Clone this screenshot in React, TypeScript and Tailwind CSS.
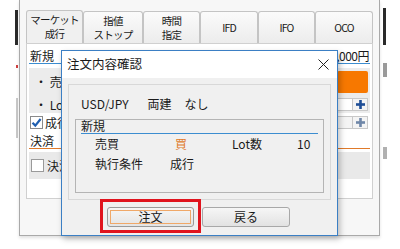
import React from 'react';

// Tab labels of the order window behind the dialog
const tabs: { label: string[]; w: string; active?: boolean }[] = [
  { label: ['マーケット', '成行'], w: 'w-[57px]', active: true },
  { label: ['指値', 'ストップ'], w: 'w-[60px]' },
  { label: ['時間', '指定'], w: 'w-[57px]' },
  { label: ['IFD'], w: 'w-[58px]' },
  { label: ['IFO'], w: 'w-[57px]' },
  { label: ['OCO'], w: 'w-[58px]' },
];

const PlusBox = ({ dim }: { dim?: boolean }) => (
  <div className="flex h-[13px] w-[16px] items-center justify-center border border-[#c8c8c8] bg-[#f4f4f4]">
    <svg width="9" height="9" viewBox="0 0 9 9">
      <rect x="3.2" y="0" width="2.6" height="9" fill={dim ? '#6f87a8' : '#1f4e96'} />
      <rect x="0" y="3.2" width="9" height="2.6" fill={dim ? '#6f87a8' : '#1f4e96'} />
    </svg>
  </div>
);

export default function App() {
  return (
    <div
      className="relative flex h-[249px] w-[400px] overflow-hidden bg-white text-[12px] text-[#1a1a1a]"
      style={{ fontFamily: '"Noto Sans CJK JP", "Noto Sans", sans-serif' }}
    >
      {/* left strip: edge of another window */}
      <div className="flex w-[19px] flex-col items-end pt-[10px] pr-[1px]">
        <div className="h-[35px] w-[3px] bg-[#2a2a2a]" />
        <div className="mt-[20px] h-[3px] w-[2px] bg-[#d04040]" />
        <div className="mt-[30px] h-[40px] w-[2px] bg-[#c8c8c8]" />
      </div>

      {/* main order window */}
      <div className="flex h-[236px] w-[361px] flex-col border-x border-b border-[#a9a9a9] bg-[#f7f7f7] pl-[6px] pt-[10px] shadow-[0_2px_3px_rgba(0,0,0,0.12)]">
        <div className="flex items-end">
          {tabs.map((t, i) => (
            <div
              key={i}
              className={`flex ${t.w} flex-col items-center justify-center whitespace-nowrap rounded-t-[3px] border border-b-0 border-[#c4c4c4] text-[10.5px] leading-[16px] tracking-[-0.8px] ${
                t.active ? 'h-[33px] bg-[#f0f0f0]' : 'h-[32px] bg-gradient-to-b from-[#fbfbfb] to-[#ececec]'
              }`}
            >
              {t.label.map((l) => (
                <span key={l} className="-my-[1px]">
                  {l}
                </span>
              ))}
            </div>
          ))}
        </div>
        <div className="flex h-[156px] w-[347px] flex-col border border-[#d0d0d0] bg-white px-[2px] pt-[3px]">
          <div className="flex h-[17px] items-end justify-between border-b border-[#3c8dd0] px-[1px] text-[12px]">
            <span className="leading-[15px]">新規</span>
            <span className="leading-[15px] tracking-[-0.5px]">1,000円</span>
          </div>
          <div className="mt-[4px] flex h-[28px] items-center justify-between bg-[#ececec]">
            <span className="pl-[6px]">・ 売買</span>
            <div className="mr-[2px] h-[22px] w-[31px] rounded-[2px] bg-[#f77800]" />
          </div>
          <div className="flex h-[17px] items-center justify-between bg-[#ececec]">
            <span className="pl-[6px]">・ Lot数</span>
            <div className="mr-[2px] flex items-center">
              <div className="h-[13px] w-[16px] border border-r-0 border-[#c8c8c8] bg-white" />
              <PlusBox />
            </div>
          </div>
          <div className="mt-[1px] flex h-[17px] items-center justify-between">
            <span className="flex items-center gap-[2px] pl-[1px]">
              <span className="flex h-[13px] w-[13px] items-center justify-center border border-[#8a8a8a] bg-white">
                <svg width="11" height="11" viewBox="0 0 11 11">
                  <path d="M1.5 5.8 L4.3 8.6 L9.6 2" fill="none" stroke="#1f5fb0" strokeWidth="2.2" />
                </svg>
              </span>
              成行
            </span>
            <div className="mr-[2px] flex items-center">
              <div className="h-[13px] w-[16px] border border-r-0 border-[#c8c8c8] bg-[#f4f4f4]" />
              <PlusBox dim />
            </div>
          </div>
          <div className="mt-[1px] flex h-[17px] items-end border-b border-[#e07a2a] px-[1px]">
            <span className="leading-[15px]">決済</span>
          </div>
          <div className="mt-[3px] flex h-[27px] items-center bg-[#e9e9e9] pl-[2px]">
            <span className="flex items-center gap-[3px]">
              <span className="h-[13px] w-[13px] border border-[#9a9a9a] bg-white" />
              決済
            </span>
          </div>
        </div>
      </div>

      {/* right strip: edge of another window */}
      <div className="flex w-[20px] flex-col pl-[3px] pt-[8px]">
        <div className="h-[37px] w-[3px] bg-[#2a2a2a]" />
        <div className="mt-[18px] h-[14px] w-[4px] bg-[#9a9a9a]" />
        <div className="mt-[70px] h-[12px] w-[4px] bg-[#b0b0b0]" />
      </div>

      {/* confirmation dialog */}
      <div className="absolute left-[61px] top-[50px] flex h-[186px] w-[277px] flex-col border border-[#3b7fc4] bg-[#f0f0f0] shadow-[2px_3px_6px_rgba(0,0,0,0.25)]">
        <div className="flex h-[27px] items-center justify-between bg-white pl-[5px] pr-[8px]">
          <span className="text-[12.5px]">注文内容確認</span>
          <svg width="11" height="11" viewBox="0 0 11 11">
            <path d="M0.5 0.5 L10.5 10.5 M10.5 0.5 L0.5 10.5" stroke="#222" strokeWidth="1" />
          </svg>
        </div>
        <div className="mx-[6px] mt-[6px] flex h-[116px] flex-col border border-[#d8d8d8] px-[6px]">
          <div className="flex h-[34px] items-center gap-[19px] pl-[6px] pt-[3px]">
            <span>USD/JPY</span>
            <span className="flex gap-[13px]">
              <span>両建</span>
              <span>なし</span>
            </span>
          </div>
          <div className="h-[74px] border border-[#b4b4b4] px-[5px]">
            <div className="flex h-[14px] items-end border-b border-[#3c8dd0] leading-[14px]">新規</div>
            <div className="relative h-[20px] leading-[20px]">
              <span className="absolute left-[14px] top-[0px]">売買</span>
              <span className="absolute left-[94px] top-[0px] text-[#e07a2a]">買</span>
              <span className="absolute left-[151px] top-[0px]">Lot数</span>
              <span className="absolute left-[216px] top-[0px]">10</span>
            </div>
            <div className="relative h-[20px] leading-[20px]">
              <span className="absolute left-[14px]">執行条件</span>
              <span className="absolute left-[89px]">成行</span>
            </div>
          </div>
        </div>
        <div className="mt-[7px] flex gap-[8px] pl-[45px]">
          <button className="flex h-[20px] w-[87px] items-center justify-center rounded-[3px] border border-[#9a9a9a] bg-gradient-to-b from-[#f6f6f6] to-[#e4e4e4] p-[2px]">
            <span className="flex h-full w-full items-center justify-center border border-[#f0a868] text-[12px] leading-none">
              注文
            </span>
          </button>
          <button className="flex h-[20px] w-[88px] items-center justify-center rounded-[3px] border border-[#a8a8a8] bg-gradient-to-b from-[#f6f6f6] to-[#e2e2e2] text-[12px] leading-none">
            戻る
          </button>
        </div>
      </div>

      {/* red highlight around the order button */}
      <div className="absolute left-[100px] top-[199px] h-[34px] w-[101px] border-[3px] border-[#e0141e]" />
    </div>
  );
}
